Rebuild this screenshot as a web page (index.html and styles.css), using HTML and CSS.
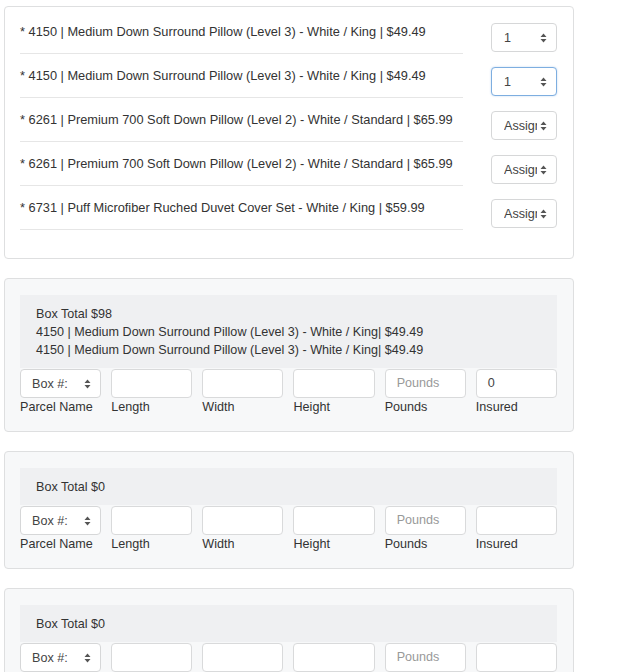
FILE: index.html
```html
<!DOCTYPE html>
<html>
<head>
<meta charset="utf-8">
<link rel="stylesheet" href="styles.css">
</head>
<body>
<div class="page">
  <div class="card items">
    <div class="row">
      <div class="item">* 4150 | Medium Down Surround Pillow (Level 3) - White / King | $49.49</div>
      <div class="sel small"><span class="val">1</span><svg class="arr" width="7" height="10" viewBox="0 0 7 10"><path d="M3.5 0.5 L6.5 4 L0.5 4 Z M0.5 6 L6.5 6 L3.5 9.5 Z" fill="#555"/></svg></div>
    </div>
    <div class="row">
      <div class="item">* 4150 | Medium Down Surround Pillow (Level 3) - White / King | $49.49</div>
      <div class="sel small focus"><span class="val">1</span><svg class="arr" width="7" height="10" viewBox="0 0 7 10"><path d="M3.5 0.5 L6.5 4 L0.5 4 Z M0.5 6 L6.5 6 L3.5 9.5 Z" fill="#555"/></svg></div>
    </div>
    <div class="row">
      <div class="item">* 6261 | Premium 700 Soft Down Pillow (Level 2) - White / Standard | $65.99</div>
      <div class="sel small"><span class="val">Assign</span><svg class="arr" width="7" height="10" viewBox="0 0 7 10"><path d="M3.5 0.5 L6.5 4 L0.5 4 Z M0.5 6 L6.5 6 L3.5 9.5 Z" fill="#555"/></svg></div>
    </div>
    <div class="row">
      <div class="item">* 6261 | Premium 700 Soft Down Pillow (Level 2) - White / Standard | $65.99</div>
      <div class="sel small"><span class="val">Assign</span><svg class="arr" width="7" height="10" viewBox="0 0 7 10"><path d="M3.5 0.5 L6.5 4 L0.5 4 Z M0.5 6 L6.5 6 L3.5 9.5 Z" fill="#555"/></svg></div>
    </div>
    <div class="row">
      <div class="item">* 6731 | Puff Microfiber Ruched Duvet Cover Set - White / King | $59.99</div>
      <div class="sel small"><span class="val">Assign</span><svg class="arr" width="7" height="10" viewBox="0 0 7 10"><path d="M3.5 0.5 L6.5 4 L0.5 4 Z M0.5 6 L6.5 6 L3.5 9.5 Z" fill="#555"/></svg></div>
    </div>
  </div>

  <div class="card box">
    <div class="head">
      <div>Box Total $98</div>
      <div>4150 | Medium Down Surround Pillow (Level 3) - White / King| $49.49</div>
      <div>4150 | Medium Down Surround Pillow (Level 3) - White / King| $49.49</div>
    </div>
    <div class="fields">
      <div class="sel"><span class="val">Box #:</span><svg class="arr" width="7" height="10" viewBox="0 0 7 10"><path d="M3.5 0.5 L6.5 4 L0.5 4 Z M0.5 6 L6.5 6 L3.5 9.5 Z" fill="#555"/></svg></div>
      <div class="inp"></div>
      <div class="inp"></div>
      <div class="inp"></div>
      <div class="inp ph">Pounds</div>
      <div class="inp">0</div>
    </div>
    <div class="labels">
      <div>Parcel Name</div><div>Length</div><div>Width</div><div>Height</div><div>Pounds</div><div>Insured</div>
    </div>
  </div>

  <div class="card box">
    <div class="head">
      <div>Box Total $0</div>
    </div>
    <div class="fields">
      <div class="sel"><span class="val">Box #:</span><svg class="arr" width="7" height="10" viewBox="0 0 7 10"><path d="M3.5 0.5 L6.5 4 L0.5 4 Z M0.5 6 L6.5 6 L3.5 9.5 Z" fill="#555"/></svg></div>
      <div class="inp"></div>
      <div class="inp"></div>
      <div class="inp"></div>
      <div class="inp ph">Pounds</div>
      <div class="inp"></div>
    </div>
    <div class="labels">
      <div>Parcel Name</div><div>Length</div><div>Width</div><div>Height</div><div>Pounds</div><div>Insured</div>
    </div>
  </div>

  <div class="card box">
    <div class="head">
      <div>Box Total $0</div>
    </div>
    <div class="fields">
      <div class="sel"><span class="val">Box #:</span><svg class="arr" width="7" height="10" viewBox="0 0 7 10"><path d="M3.5 0.5 L6.5 4 L0.5 4 Z M0.5 6 L6.5 6 L3.5 9.5 Z" fill="#555"/></svg></div>
      <div class="inp"></div>
      <div class="inp"></div>
      <div class="inp"></div>
      <div class="inp ph">Pounds</div>
      <div class="inp"></div>
    </div>
    <div class="labels">
      <div>Parcel Name</div><div>Length</div><div>Width</div><div>Height</div><div>Pounds</div><div>Insured</div>
    </div>
  </div>
</div>
</body>
</html>
```

FILE: styles.css
```css
html, body {
  margin: 0;
  padding: 0;
  background: #fff;
}
body {
  font-family: "Liberation Sans", Arial, Helvetica, sans-serif;
  font-size: 12.6px;
  line-height: 18px;
  color: #333;
}
.page {
  padding: 6px 0 0 4px;
  width: 570px;
}
.card {
  box-sizing: border-box;
  width: 570px;
  border: 1px solid #dedfe0;
  border-radius: 4px;
  margin-bottom: 19px;
}
.items {
  background: #fff;
  padding: 3px 16px 28px 15px;
}
.row {
  display: flex;
  align-items: flex-start;
}
.item {
  box-sizing: border-box;
  width: 443px;
  height: 44px;
  padding-top: 13px;
  border-bottom: 1px solid #e6e6e6;
  white-space: nowrap;
  font-size: 12.8px;
}
.sel {
  box-sizing: border-box;
  height: 29px;
  background: #fff;
  border: 1px solid #d6d7d8;
  border-radius: 4px;
  display: flex;
  align-items: center;
  padding: 0 9px 0 11px;
}
.sel .val {
  flex: 1;
  overflow: hidden;
  white-space: nowrap;
  color: #444;
}
.sel .arr {
  flex: 0 0 7px;
  margin-left: 3px;
}
.small {
  width: 66px;
  margin-left: auto;
  margin-top: 13px;
  padding-left: 12px;
}
.focus {
  border-color: #7eaee0;
  box-shadow: 0 0 2px rgba(102, 160, 225, 0.45);
}
.box {
  background: #f7f8f9;
  padding: 16px 16px 15px 15px;
}
.head {
  background: #eff0f2;
  padding: 10px 16px 9px 16px;
  margin-bottom: 1px;
  white-space: nowrap;
}
.fields, .labels {
  display: grid;
  grid-template-columns: repeat(6, 1fr);
  column-gap: 10px;
}
.inp {
  box-sizing: border-box;
  height: 29px;
  background: #fff;
  border: 1px solid #d9dadb;
  border-radius: 4px;
  padding: 0 11px;
  line-height: 27px;
  color: #444;
}
.ph {
  color: #999;
}
.labels div {
  white-space: nowrap;
}
```
